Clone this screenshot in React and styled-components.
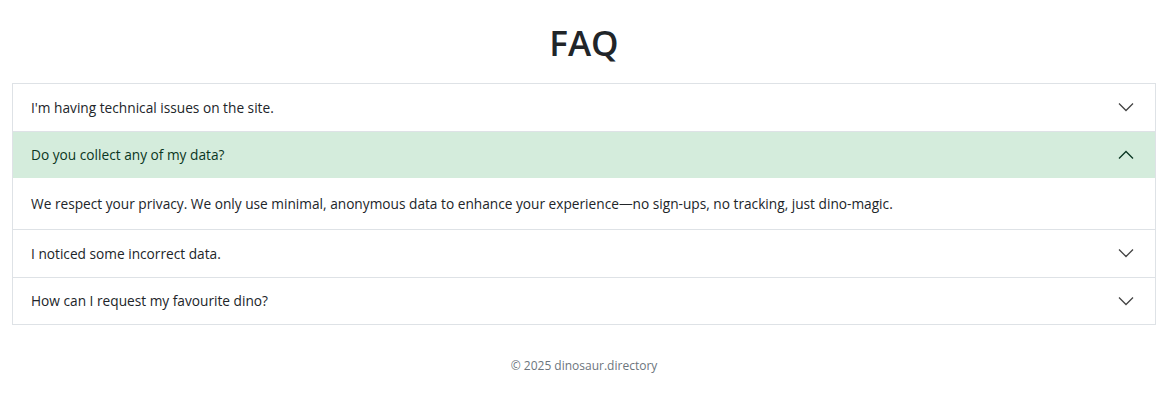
import React, { useState } from "react";
import styled, { createGlobalStyle } from "styled-components";

const GlobalStyle = createGlobalStyle`
    body {
        margin: 0;
        background: #fff;
        font-family: "Open Sans", "Noto Sans", sans-serif;
        color: #212529;
    }
`;

const Page = styled.div`
    padding: 18px 19px 0 12px;
`;

const Title = styled.h1`
    margin: 0 0 15px;
    text-align: center;
    font-size: 35px;
    line-height: 50px;
    font-weight: 600;
    color: #212529;
`;

const Accordion = styled.div`
    border: 1px solid #dee2e6;
`;

const Item = styled.div`
    & + & {
        border-top: 1px solid #dee2e6;
    }
`;

const Header = styled.button`
    display: flex;
    align-items: center;
    justify-content: space-between;
    width: 100%;
    height: 46.5px;
    padding: 0 21px 0 18px;
    border: 0;
    background: ${(p) => (p.$open ? "#d4ecdc" : "#fff")};
    color: ${(p) => (p.$open ? "#0a3622" : "#212529")};
    font-family: inherit;
    font-size: 13.7px;
    text-align: left;
    cursor: pointer;
`;

const Body = styled.div`
    padding: 0 18px;
    height: 51px;
    display: flex;
    align-items: center;
    font-size: 13.7px;
    color: #212529;
`;

const Footer = styled.footer`
    text-align: center;
    font-size: 12px;
    color: #6c757d;
    margin-top: 32px;
`;

const Chevron = ({ up }) => (
    <svg width="16" height="10" viewBox="0 0 16 10" fill="none">
        <polyline
            points={up ? "1,8.5 8,1.5 15,8.5" : "1,1.5 8,8.5 15,1.5"}
            stroke={up ? "#0a3622" : "#444"}
            strokeWidth="1.3"
        />
    </svg>
);

const FAQS = [
    { q: "I'm having technical issues on the site.", a: "Please try refreshing the page or clearing your cache." },
    { q: "Do you collect any of my data?", a: "We respect your privacy. We only use minimal, anonymous data to enhance your experience\u2014no sign-ups, no tracking, just dino-magic." },
    { q: "I noticed some incorrect data.", a: "Let us know and we'll fix it." },
    { q: "How can I request my favourite dino?", a: "Send us a message with its name." },
];

export default function App() {
    const [open, setOpen] = useState(1);
    return (
        <Page>
            <GlobalStyle />
            <Title>FAQ</Title>
            <Accordion>
                {FAQS.map((f, i) => (
                    <Item key={i}>
                        <Header $open={open === i} onClick={() => setOpen(open === i ? -1 : i)}>
                            {f.q}
                            <Chevron up={open === i} />
                        </Header>
                        {open === i && <Body>{f.a}</Body>}
                    </Item>
                ))}
            </Accordion>
            <Footer>© 2025 dinosaur.directory</Footer>
        </Page>
    );
}
